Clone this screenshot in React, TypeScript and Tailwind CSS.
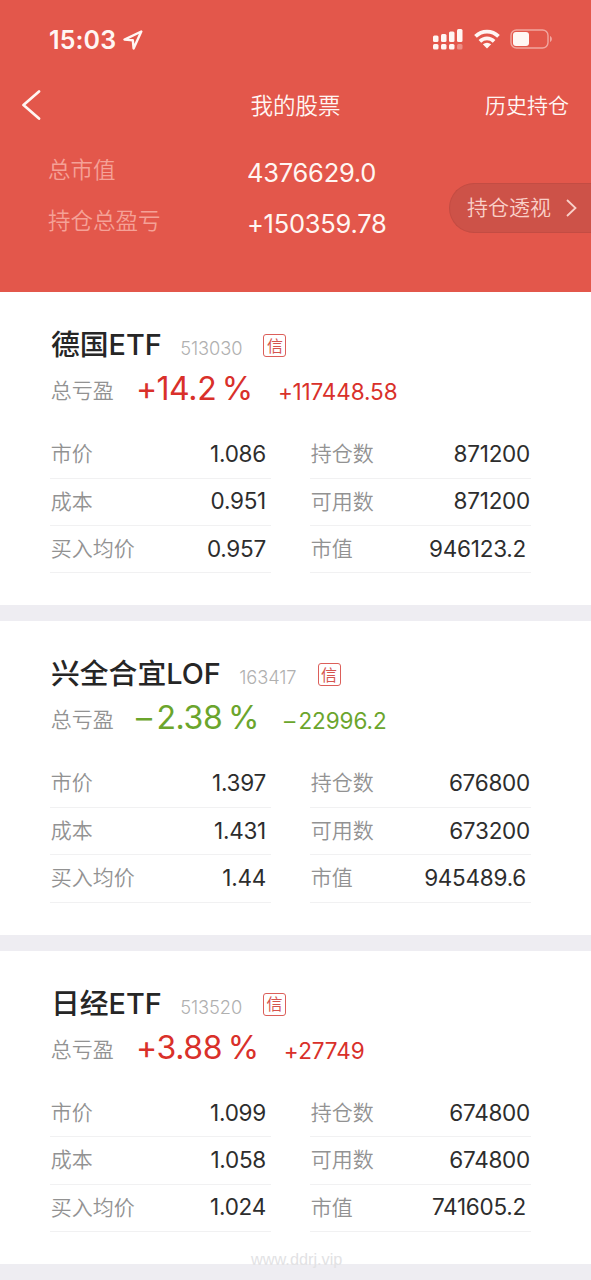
import React from 'react';

const stocks = [
  {
    name: '德国ETF',
    code: '513030',
    percent: '+14.2 %',
    amount: '+117448.58',
    up: true,
    left: [['市价', '1.086'], ['成本', '0.951'], ['买入均价', '0.957']],
    right: [['持仓数', '871200'], ['可用数', '871200'], ['市值', '946123.2']],
  },
  {
    name: '兴全合宜LOF',
    code: '163417',
    percent: '–2.38 %',
    amount: '–22996.2',
    up: false,
    left: [['市价', '1.397'], ['成本', '1.431'], ['买入均价', '1.44']],
    right: [['持仓数', '676800'], ['可用数', '673200'], ['市值', '945489.6']],
  },
  {
    name: '日经ETF',
    code: '513520',
    percent: '+3.88 %',
    amount: '+27749',
    up: true,
    left: [['市价', '1.099'], ['成本', '1.058'], ['买入均价', '1.024']],
    right: [['持仓数', '674800'], ['可用数', '674800'], ['市值', '741605.2']],
  },
];

const StatusBar = () => (
  <div className="flex h-[78px] items-center pl-[49px] pr-[38px]">
    <span className="pt-[3px] text-[25px] font-semibold tracking-[0.1px]">15:03</span>
    <svg className="ml-[7px] mt-px h-5 w-5" viewBox="0 0 20 20" fill="none" stroke="currentColor" strokeWidth="2.4" strokeLinejoin="round">
      <path d="M18.3 1.5 1.5 9.6l8.3.6.8 8.3z" />
    </svg>
    <svg className="ml-auto h-[22px] w-[30px]" viewBox="0 0 30 22" fill="currentColor">
      <rect x="0" y="7.5" width="5.5" height="6.5" rx="1.5" />
      <rect x="8" y="6" width="5.5" height="8" rx="1.5" />
      <rect x="16" y="3.5" width="5.5" height="10.5" rx="1.5" />
      <rect x="24" y="1" width="5.5" height="13" rx="1.5" />
      <rect x="0" y="16" width="5.5" height="5.5" rx="1.5" />
      <rect x="8" y="16" width="5.5" height="5.5" rx="1.5" />
      <rect x="16" y="16" width="5.5" height="5.5" rx="1.5" />
      <rect x="24" y="16" width="5.5" height="5.5" rx="1.5" opacity="0.35" />
    </svg>
    <svg className="ml-[11px] h-5 w-[26px]" viewBox="0 0 26 20" fill="none" stroke="currentColor" strokeWidth="3.8">
      <path d="M1.5 7.4C8 .9 18 .9 24.5 7.4" />
      <path d="M5.9 12.3c4.200-4 10-4 14.200 0" />
      <path d="m13 19.4-4.200-4.100q4.200-3.200 8.400 0z" fill="currentColor" stroke="none" />
    </svg>
    <svg className="ml-[10px] h-5 w-[43px]" viewBox="0 0 43 20" fill="none">
      <rect x="1" y="1" width="37" height="18" rx="5.5" stroke="currentColor" strokeWidth="1.4" opacity="0.5" />
      <rect x="3" y="3" width="16" height="14" rx="3" fill="currentColor" />
      <path d="M40 7v6c2.500-1 2.500-5 0-6z" fill="currentColor" opacity="0.5" />
    </svg>
  </div>
);

const Header = () => (
  <header className="h-[292.2px] bg-[#e3574b] text-[#fff6f3]">
    <StatusBar />
    <nav className="grid h-[55px] grid-cols-3 items-center pl-[22px] pr-[22px]">
      <svg className="-mt-px h-[30px] w-[19px]" viewBox="0 0 19 30" fill="none" stroke="currentColor" strokeWidth="2.7" strokeLinecap="round" strokeLinejoin="round">
        <path d="M17 1.5 1.5 15 17 28.5" />
      </svg>
      <h1 className="text-center text-[22.5px] font-[350]">我的股票</h1>
      <a href="#" className="text-right text-[21px] font-[350]">历史持仓</a>
    </nav>
    <div className="flex pl-12 pt-[12px]">
      <dl className="grid grid-cols-[199px_1fr] text-[25.5px] font-[370] leading-[50px]">
        <dt className="text-[22.5px] font-[350] text-[#f5a197]">总市值</dt>
        <dd className="pt-[3px] tracking-[-0.25px]">4376629.0</dd>
        <dt className="-mt-[2px] text-[22.5px] font-[350] text-[#f5a197]">持仓总盈亏</dt>
        <dd className="pt-px tracking-[-0.25px]">+150359.78</dd>
      </dl>
      <button className="ml-auto mt-[38px] flex h-[50px] w-[142px] items-center rounded-l-full border border-r-0 border-[#c34c43] bg-[#cd5248] pl-[17px] text-[21px] font-[350] text-[#f9d0c9]">
        持仓透视
        <svg className="ml-[15px] h-[18px] w-[11px]" viewBox="0 0 11 18" fill="none" stroke="currentColor" strokeWidth="1.8">
          <path d="m1 1 8.500 8L1 17" />
        </svg>
      </button>
    </div>
  </header>
);

// 正负号占固定宽度，数字起点对齐
const Signed = ({ text, signClass }: { text: string; signClass: string }) => (
  <>
    <span className={`inline-block ${signClass}`}>{text[0]}</span>
    {text.slice(1)}
  </>
);

// 整数不缩进，带小数的值多缩进一点
const Column = ({ rows }: { rows: string[][] }) => (
  <dl className="flex-1">
    {rows.map(([label, value]) => (
      <div
        key={label}
        className={`flex h-[47.4px] items-center justify-between border-b border-[#f1f1f2] pb-px pl-[0.7px] ${value.includes('.') ? 'pr-[5px]' : 'pr-px'}`}
      >
        <dt className="text-[21px] font-[350] text-[#929292]">{label}</dt>
        <dd className="text-[22.5px] tracking-[-0.25px] text-[#2d2d2d]">{value}</dd>
      </div>
    ))}
  </dl>
);

const StockCard = ({ stock }: { stock: (typeof stocks)[number] }) => (
  <section className="h-[329.3px] border-b-[16px] border-[#eeedf2] bg-white pl-[50px] pr-[60px] pt-[31px]">
    <div className="flex h-[44px] items-baseline pl-px leading-[44px]">
      <h2 className="text-[28.8px] font-medium text-[#262626]">{stock.name}</h2>
      <span className="ml-[18.5px] text-[18.3px] font-light tracking-[-0.1px] text-[#b0b0b0]">{stock.code}</span>
      <span className="ml-[21px] mt-px flex h-[23px] w-[23px] items-center justify-center self-center rounded-[3px] border border-[#dc5f5a] text-[16px] leading-none text-[#d5544f]">
        信
      </span>
    </div>
    <div className="flex h-[44px] items-baseline leading-[44px]">
      <span className="relative -top-[2px] w-[86px] pl-[0.7px] text-[21px] font-[350] text-[#929292]">总亏盈</span>
      <span className={`text-[32px] font-[370] tracking-[-0.4px] [word-spacing:-3px] ${stock.up ? 'text-[#d9302a]' : 'text-[#6ba52c]'}`}>
        <Signed text={stock.percent} signClass="w-[20.5px]" />
      </span>
      <span className={`ml-[25px] text-[22.5px] font-[370] tracking-[-0.1px] ${stock.up ? 'text-[#d9302a]' : 'text-[#6ba52c]'}`}>
        <Signed text={stock.amount} signClass="w-[14.5px]" />
      </span>
    </div>
    <div className="mt-[20px] flex gap-[39px]">
      <Column rows={stock.left} />
      <Column rows={stock.right} />
    </div>
  </section>
);

export default function App() {
  return (
    <div className="relative h-[1280px] w-[591px] overflow-hidden bg-[#eeedf2] font-['Inter','Noto_Sans_CJK_SC',sans-serif]">
      <Header />
      <main>
        {stocks.map((stock) => (
          <StockCard key={stock.code} stock={stock} />
        ))}
      </main>
      <span className="absolute left-[251px] top-[1249px] font-['Liberation_Sans',sans-serif] text-[16.3px] leading-5 text-[#e2e2e4]">
        www.ddrj.vip
      </span>
    </div>
  );
}
